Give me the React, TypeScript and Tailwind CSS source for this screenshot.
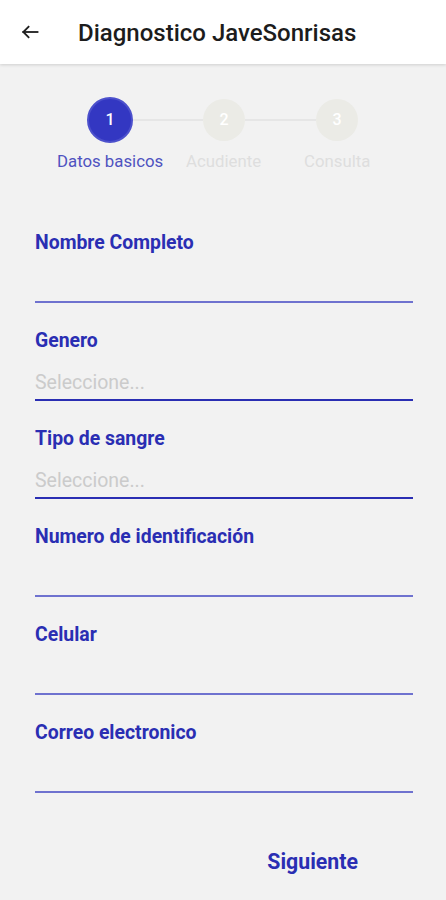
import React from "react";

const fields = [
  { label: "Nombre Completo", placeholder: "", dark: false },
  { label: "Genero", placeholder: "Seleccione...", dark: true },
  { label: "Tipo de sangre", placeholder: "Seleccione...", dark: true },
  { label: "Numero de identificación", placeholder: "", dark: false },
  { label: "Celular", placeholder: "", dark: false },
  { label: "Correo electronico", placeholder: "", dark: false },
];

export default function App() {
  return (
    <div className="w-[446px] h-[900px] bg-[#f2f2f2] flex flex-col" style={{ fontFamily: "Roboto, 'Liberation Sans', sans-serif" }}>
      <div className="h-[64px] bg-white flex items-center shadow-[0_1px_3px_rgba(0,0,0,0.15)] z-10">
        <div className="w-[78px] flex items-center pl-[20px]">
          <svg width="20" height="20" viewBox="0 0 24 24" fill="none" stroke="#1f1f1f" strokeWidth="2.2" strokeLinecap="square">
            <path d="M21 12H4" />
            <path d="M11 5l-7 7 7 7" strokeLinecap="butt" />
          </svg>
        </div>
        <span className="text-[24px] font-medium text-[#1c1c1c] leading-[28px] mt-[2px]">Diagnostico JaveSonrisas</span>
      </div>

      <div className="flex flex-col pt-[33px]">
        <div className="relative h-[46px]">
          <div className="absolute top-[22px] left-[133px] w-[70px] h-[2px] bg-[#e6e6e6]" />
          <div className="absolute top-[22px] left-[245px] w-[71px] h-[2px] bg-[#e6e6e6]" />
          <div className="absolute left-[87px] top-0 w-[46px] h-[46px] rounded-full bg-[#3337c2] border-2 border-[#4c50cc] flex items-center justify-center text-white text-[16px] font-medium">1</div>
          <div className="absolute left-[203px] top-[2px] w-[42px] h-[42px] rounded-full bg-[#ebebe6] flex items-center justify-center text-white text-[16px] font-medium">2</div>
          <div className="absolute left-[316px] top-[2px] w-[42px] h-[42px] rounded-full bg-[#ebebe6] flex items-center justify-center text-white text-[16px] font-medium">3</div>
        </div>
        <div className="relative h-[20px] mt-[8px] text-[16.8px] leading-[20px]">
          <span className="absolute left-[57px] text-[#4f52c0]">Datos basicos</span>
          <span className="absolute left-[186px] text-[#dedede]">Acudiente</span>
          <span className="absolute left-[304px] text-[#dedede]">Consulta</span>
        </div>
      </div>

      <div className="flex flex-col px-[35px] pr-[33px] mt-[61px] gap-[27px]">
        {fields.map((f) => (
          <div key={f.label} className="flex flex-col">
            <div className="h-[22px] leading-[22px] text-[19.4px] font-bold text-[#2a2eb3]">{f.label}</div>
            <div
              className={`h-[49px] flex items-end pb-[5px] border-b-2 ${f.dark ? "border-[#2a2eb3]" : "border-[#6f72cf]"}`}
            >
              <span className="text-[19.5px] text-[#cbcbcb] leading-[22px]">{f.placeholder}</span>
            </div>
          </div>
        ))}
      </div>

      <div className="flex justify-end pr-[88px] mt-[57px]">
        <span className="text-[21.3px] leading-[24px] font-bold text-[#2a2eb3]">Siguiente</span>
      </div>
    </div>
  );
}
